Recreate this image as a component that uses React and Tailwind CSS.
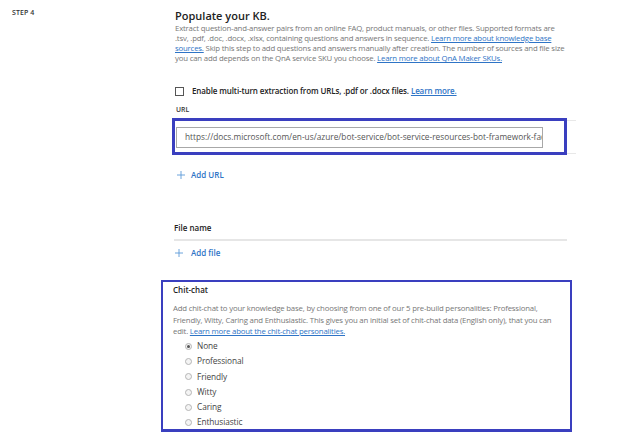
import React from "react";

const font = { fontFamily: '"Open Sans", "Noto Sans", Arial, sans-serif' };

function Plus() {
  return (
    <svg width="8" height="8" viewBox="0 0 8 8" className="shrink-0">
      <path d="M4 0V8M0 4H8" stroke="#5b9ad8" strokeWidth="0.9" />
    </svg>
  );
}

function Radio({ checked, label }) {
  return (
    <div className="flex items-center h-[15.3px]">
      <span className="ml-[23px] w-[7px] h-[7px] rounded-full border border-[#b5b5b5] bg-[#f4f4f4] flex items-center justify-center">
        {checked && <span className="w-[3px] h-[3px] rounded-full bg-[#555]" />}
      </span>
      <span className="ml-[5px] text-[8.3px] text-[#444] tracking-[-0.1px]">{label}</span>
    </div>
  );
}

const Link = ({ children }) => <span className="text-[#2e74c6] underline">{children}</span>;

export default function App() {
  return (
    <div className="w-[624px] h-[435px] bg-white overflow-hidden flex" style={font}>
      <div className="w-[161px] shrink-0 pl-[12px] pt-[8px]">
        <div className="text-[7px] font-semibold text-[#333] tracking-[0.1px]">STEP 4</div>
      </div>
      <div className="w-[415px] shrink-0 flex flex-col">
        <div className="pl-[14px] pt-[8px] pr-[10px]">
          <div className="text-[11px] font-semibold text-[#222] leading-[15px]">Populate your KB.</div>
          <div className="text-[7.8px] text-[#777] leading-[10px] tracking-[-0.19px] whitespace-nowrap">
            <div className="h-[10px]">Extract question-and-answer pairs from an online FAQ, product manuals, or other files. Supported formats are</div>
            <div className="h-[10px]">.tsv, .pdf, .doc, .docx, .xlsx, containing questions and answers in sequence. <Link>Learn more about knowledge base</Link></div>
            <div className="h-[10px]"><Link>sources.</Link> Skip this step to add questions and answers manually after creation. The number of sources and file size</div>
            <div className="h-[10px]">you can add depends on the QnA service SKU you choose. <Link>Learn more about QnA Maker SKUs.</Link></div>
          </div>
          <div className="flex items-center mt-[23px] h-[10px]">
            <span className="w-[9px] h-[9px] border border-[#555] bg-white shrink-0" />
            <span className="ml-[8px] text-[8px] font-semibold text-[#222] tracking-[-0.12px]">
              Enable multi-turn extraction from URLs, .pdf or .docx files. <Link>Learn more.</Link>
            </span>
          </div>
          <div className="mt-[9px] ml-[1px] text-[6.8px] font-semibold text-[#333] leading-[10px]">URL</div>
        </div>
        <div className="mt-[3px] ml-[11px] w-[404px] flex items-stretch">
          <div className="w-[395px] h-[37px] border-[3px] border-[#3a3fbf] pl-[1px] pt-[6px]">
            <div className="w-[367px] h-[21px] border border-[#a8a8a8] flex items-center pl-[8px] text-[8.3px] text-[#555] whitespace-nowrap overflow-hidden">
              https://docs.microsoft.com/en-us/azure/bot-service/bot-service-resources-bot-framework-faq
            </div>
          </div>
          <div className="flex-1 border-t border-b border-[#e8e8e8] mt-[2px] mb-[1px]" />
        </div>
        <div className="pl-[16px] mt-[15px] flex items-center gap-[6px] h-[10px]">
          <Plus />
          <span className="text-[8px] font-semibold text-[#2e74c6]">Add URL</span>
        </div>
        <div className="pl-[13px] mt-[43px] text-[8px] font-semibold text-[#222] leading-[10px]">File name</div>
        <div className="ml-[13px] mt-[6px] w-[393px] h-[2px] bg-[#e6e6e6]" />
        <div className="pl-[14px] mt-[7px] flex items-center gap-[8px] h-[10px]">
          <Plus />
          <span className="text-[8px] font-semibold text-[#2e74c6]">Add file</span>
        </div>
        <div className="mt-[22px] w-[411px] h-[152px] border-[2.5px] border-[#3a3fbf] border-b-[3px] pl-[10px] pt-[3px]">
          <div className="text-[8px] font-semibold text-[#222] leading-[10px]">Chit-chat</div>
          <div className="mt-[8px] text-[7.8px] text-[#777] leading-[11.5px] tracking-[-0.19px] whitespace-nowrap">
            <div className="h-[11.5px]">Add chit-chat to your knowledge base, by choosing from one of our 5 pre-build personalities: Professional,</div>
            <div className="h-[11.5px]">Friendly, Witty, Caring and Enthusiastic. This gives you an initial set of chit-chat data (English only), that you can</div>
            <div className="h-[11.5px]">edit. <Link>Learn more about the chit-chat personalities.</Link></div>
          </div>
          <div className="flex flex-col mt-[1px] -ml-[11px]">
            <Radio checked label="None" />
            <Radio label="Professional" />
            <Radio label="Friendly" />
            <Radio label="Witty" />
            <Radio label="Caring" />
            <Radio label="Enthusiastic" />
          </div>
        </div>
      </div>
    </div>
  );
}
